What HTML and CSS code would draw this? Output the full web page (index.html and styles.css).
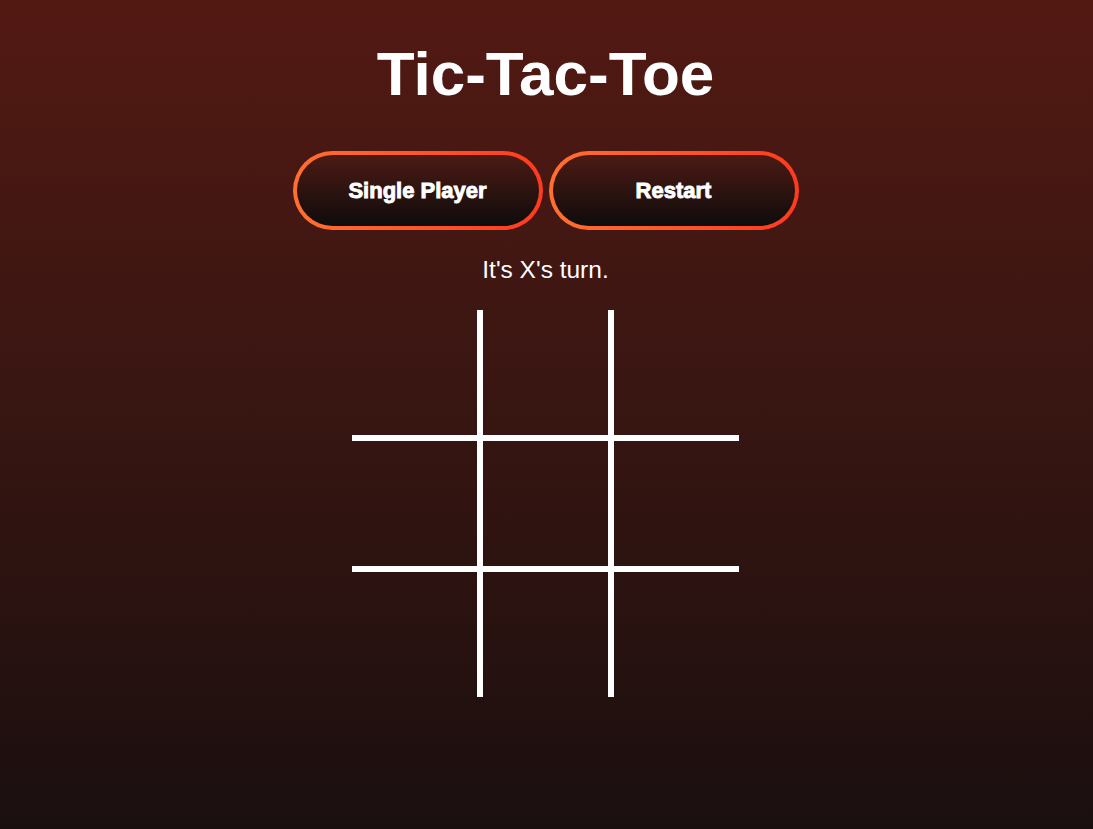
FILE: index.html
```html
<!DOCTYPE html>
<html lang="en">
<head>
<meta charset="utf-8">
<title>Tic-Tac-Toe</title>
<link rel="stylesheet" href="styles.css">
</head>
<body>
<main class="app">
  <h1 class="title">Tic-Tac-Toe</h1>
  <div class="controls">
    <button class="btn">Single Player</button>
    <button class="btn">Restart</button>
  </div>
  <p class="status">It's X's turn.</p>
  <div class="board">
    <div class="cell r0 c0"></div>
    <div class="cell r0 c1"></div>
    <div class="cell r0 c2"></div>
    <div class="cell r1 c0"></div>
    <div class="cell r1 c1"></div>
    <div class="cell r1 c2"></div>
    <div class="cell r2 c0"></div>
    <div class="cell r2 c1"></div>
    <div class="cell r2 c2"></div>
  </div>
</main>
</body>
</html>
```

FILE: styles.css
```css
html, body {
  margin: 0;
  padding: 0;
  height: 100%;
}
body {
  background: linear-gradient(to bottom, #531913 0%, #3a1612 45%, #1a0f0f 100%);
  font-family: "Liberation Sans", Arial, sans-serif;
  color: #ffffff;
}
.app {
  display: flex;
  flex-direction: column;
  align-items: center;
  padding-top: 38px;
  padding-right: 2px;
}
.title {
  margin: 0;
  font-size: 62px;
  font-weight: 700;
  line-height: 72px;
}
.controls {
  display: flex;
  gap: 6px;
  margin-top: 41px;
}
.btn {
  width: 250px;
  height: 79px;
  border: 4px solid transparent;
  border-radius: 40px;
  background:
    linear-gradient(to bottom, #4c1a14 0%, #0e0c0c 100%) padding-box,
    linear-gradient(to right, #ff7030 0%, #ff3a1f 100%) border-box;
  color: #ffffff;
  font-family: "Liberation Sans", Arial, sans-serif;
  font-size: 22px;
  font-weight: 700;
  -webkit-text-stroke: 0.9px #ffffff;
  padding: 0;
  cursor: pointer;
}
.status {
  margin: 26px 0 0 0;
  font-size: 24.5px;
  line-height: 28px;
}
.board {
  display: grid;
  grid-template-columns: 131px 131px 125px;
  grid-template-rows: 131px 131px 125px;
  margin-top: 26px;
}
.cell {
  box-sizing: border-box;
}
.c0, .c1 {
  border-right: 6px solid #ffffff;
}
.r0, .r1 {
  border-bottom: 6px solid #ffffff;
}
```
